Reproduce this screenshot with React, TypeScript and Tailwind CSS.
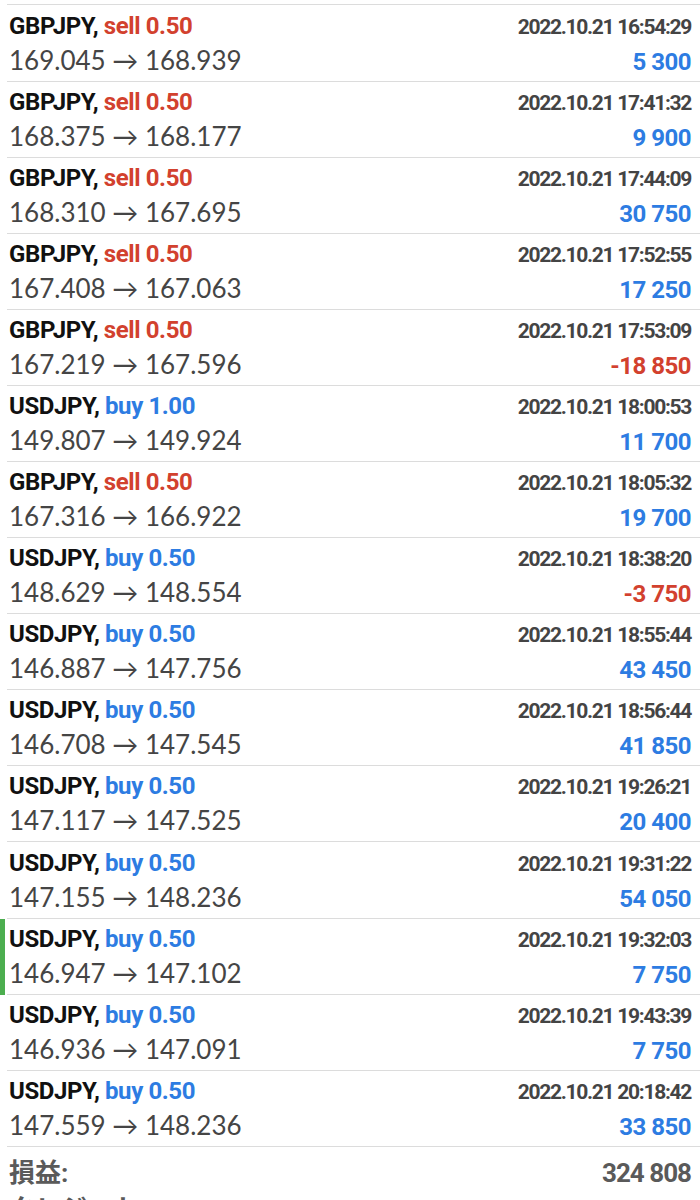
type Deal = {
  symbol: string;
  side: 'buy' | 'sell';
  volume: string;
  open: string;
  close: string;
  time: string;
  profit: string;
};

const deals: Deal[] = [
  { symbol: 'GBPJPY', side: 'sell', volume: '0.50', open: '169.045', close: '168.939', time: '2022.10.21 16:54:29', profit: '5 300' },
  { symbol: 'GBPJPY', side: 'sell', volume: '0.50', open: '168.375', close: '168.177', time: '2022.10.21 17:41:32', profit: '9 900' },
  { symbol: 'GBPJPY', side: 'sell', volume: '0.50', open: '168.310', close: '167.695', time: '2022.10.21 17:44:09', profit: '30 750' },
  { symbol: 'GBPJPY', side: 'sell', volume: '0.50', open: '167.408', close: '167.063', time: '2022.10.21 17:52:55', profit: '17 250' },
  { symbol: 'GBPJPY', side: 'sell', volume: '0.50', open: '167.219', close: '167.596', time: '2022.10.21 17:53:09', profit: '-18 850' },
  { symbol: 'USDJPY', side: 'buy', volume: '1.00', open: '149.807', close: '149.924', time: '2022.10.21 18:00:53', profit: '11 700' },
  { symbol: 'GBPJPY', side: 'sell', volume: '0.50', open: '167.316', close: '166.922', time: '2022.10.21 18:05:32', profit: '19 700' },
  { symbol: 'USDJPY', side: 'buy', volume: '0.50', open: '148.629', close: '148.554', time: '2022.10.21 18:38:20', profit: '-3 750' },
  { symbol: 'USDJPY', side: 'buy', volume: '0.50', open: '146.887', close: '147.756', time: '2022.10.21 18:55:44', profit: '43 450' },
  { symbol: 'USDJPY', side: 'buy', volume: '0.50', open: '146.708', close: '147.545', time: '2022.10.21 18:56:44', profit: '41 850' },
  { symbol: 'USDJPY', side: 'buy', volume: '0.50', open: '147.117', close: '147.525', time: '2022.10.21 19:26:21', profit: '20 400' },
  { symbol: 'USDJPY', side: 'buy', volume: '0.50', open: '147.155', close: '148.236', time: '2022.10.21 19:31:22', profit: '54 050' },
  { symbol: 'USDJPY', side: 'buy', volume: '0.50', open: '146.947', close: '147.102', time: '2022.10.21 19:32:03', profit: '7 750' },
  { symbol: 'USDJPY', side: 'buy', volume: '0.50', open: '146.936', close: '147.091', time: '2022.10.21 19:43:39', profit: '7 750' },
  { symbol: 'USDJPY', side: 'buy', volume: '0.50', open: '147.559', close: '148.236', time: '2022.10.21 20:18:42', profit: '33 850' },
];

const DealRow = ({ deal, active, tall }: { deal: Deal; active: boolean; tall: boolean }) => {
  const loss = deal.profit.startsWith('-');
  return (
    <div className="flex">
      <div className={active ? 'w-[5px] bg-[#4cae4f]' : 'w-[5px]'} />
      <div className="ml-[2px] flex-1 border-b border-[#dcdcdc] pl-[2px] pr-[9px]">
        <div className={`flex h-[28px] items-baseline justify-between leading-[28px] ${tall ? 'mt-[7px]' : 'mt-[6px]'}`}>
          <span className="font-['Roboto',sans-serif] text-[24px] font-bold tracking-[-0.4px]">
            <span className="text-[#111111]">{deal.symbol}, </span>
            <span className={deal.side === 'sell' ? 'text-[#d2412e]' : 'text-[#2d7ce2]'}>
              {deal.side} {deal.volume}
            </span>
          </span>
          <span className="font-['Roboto',sans-serif] text-[21px] font-bold tracking-[-1.3px] text-[#444444]">
            {deal.time}
          </span>
        </div>
        <div className="mt-[5px] mb-[6px] flex h-[30px] items-baseline justify-between leading-[30px]">
          <span className="font-['Lato',sans-serif] text-[26px] text-[#454545]">
            {deal.open} → {deal.close}
          </span>
          <span
            className={`font-['Roboto',sans-serif] text-[24px] font-bold tracking-[-0.5px] ${
              loss ? 'text-[#d2412e]' : 'text-[#2d7ce2]'
            }`}
          >
            {deal.profit}
          </span>
        </div>
      </div>
    </div>
  );
};

export default function App() {
  return (
    <div className="h-[1200px] overflow-hidden bg-white pt-[4px]">
      <div className="ml-[7px] h-px bg-[#dcdcdc]" />
      {deals.map((d, i) => (
        <DealRow key={i} deal={d} active={i === 12} tall={i === 0 || i === 11} />
      ))}
      <div className="mt-[10px] flex h-[32px] items-baseline justify-between px-[9px] leading-[32px] text-[#5a5a5a]">
        <span className="font-['Roboto','Noto_Sans_CJK_JP',sans-serif] text-[26px] font-bold">損益:</span>
        <span className="font-['Roboto',sans-serif] text-[26px] font-bold tracking-[-1px]">324 808</span>
      </div>
      <div className="mt-[5px] pl-[9px] font-['Roboto','Noto_Sans_CJK_JP',sans-serif] text-[26px] font-bold leading-[30px] text-[#5a5a5a]">
        クレジット:
      </div>
    </div>
  );
}
